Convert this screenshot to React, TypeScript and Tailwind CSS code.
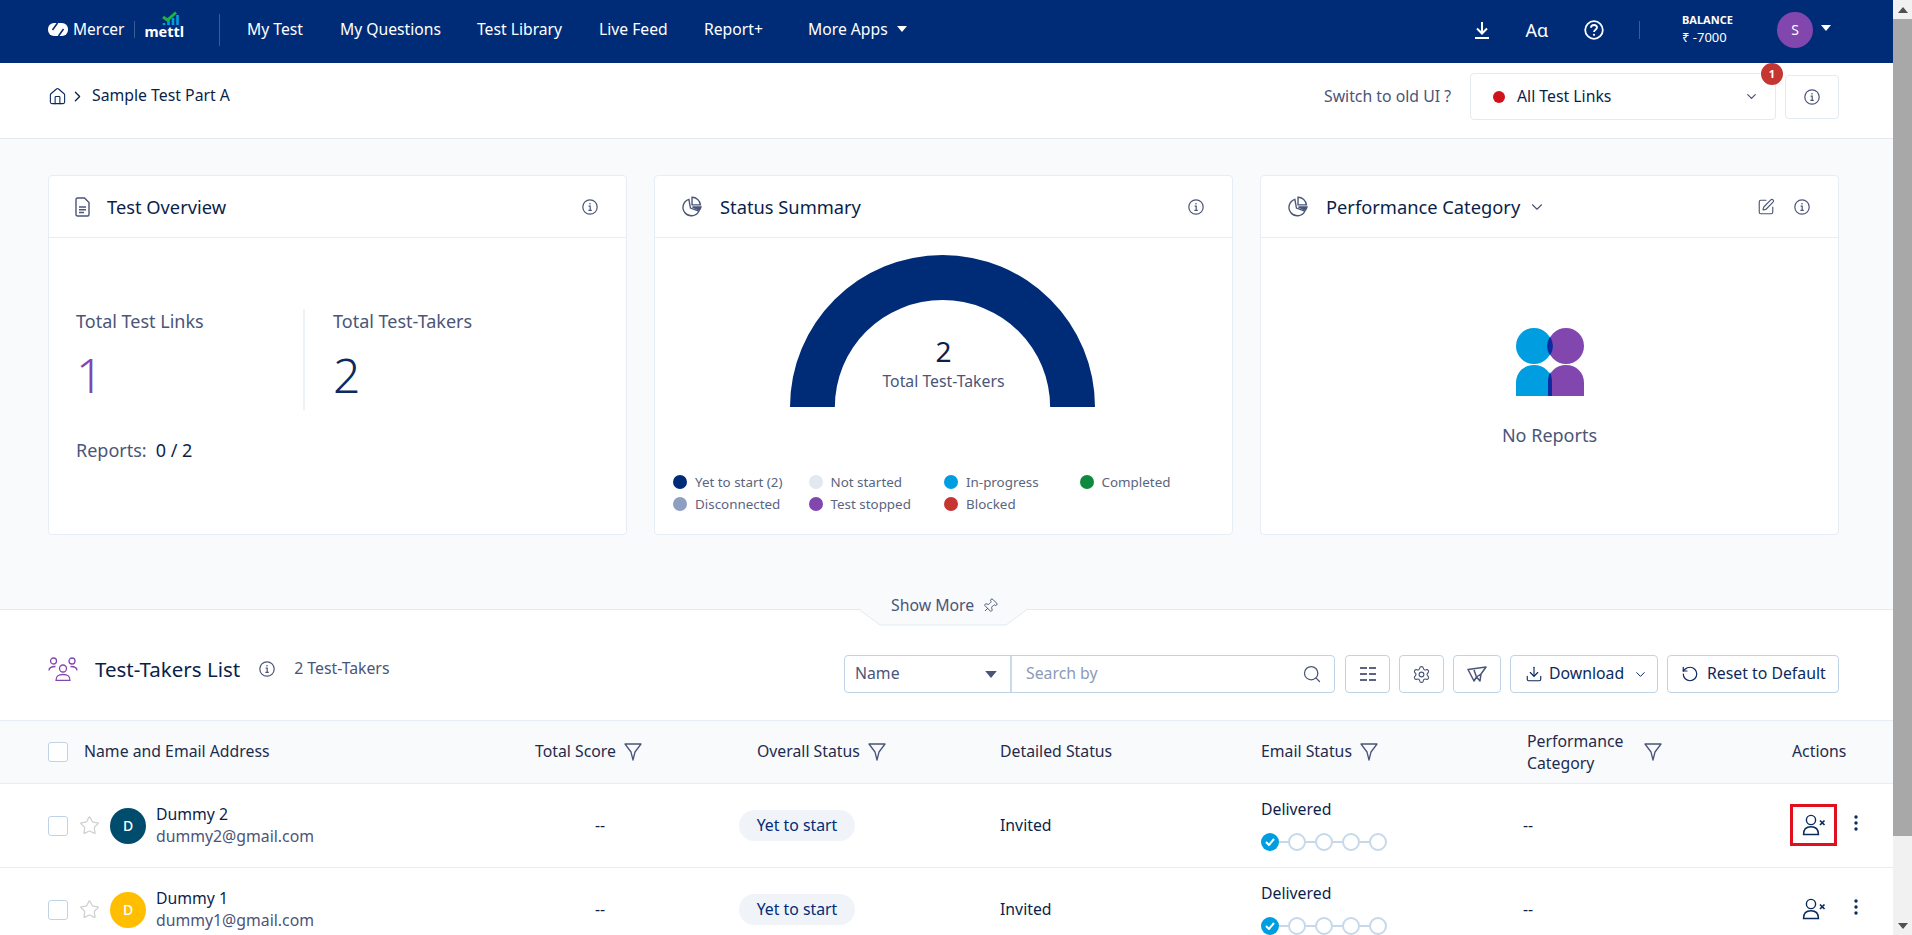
import React from "react";
import { Home, ChevronRight, ChevronDown, Search, Settings, Download, RotateCcw, Star, Pin, SquarePen } from "lucide-react";

const Info = ({ size = 16 }: { size?: number }) => (
  <svg width={size} height={size} viewBox="0 0 16 16" fill="none" stroke="#4a5578" strokeWidth="1.2" className="shrink-0">
    <circle cx="8" cy="8" r="7.2" />
    <path d="M6.6 7.2H8.2V11.4M6.4 11.4H9.8" />
    <circle cx="8" cy="4.8" r="0.8" fill="#4a5578" stroke="none" />
  </svg>
);

const PieIcon = () => (
  <svg width="21" height="21" viewBox="0 0 20 20" fill="none" stroke="#4a5578" strokeWidth="1.3" className="shrink-0">
    <path d="M7.5 3.2A8 8 0 1 0 17 14.5L9 11.5Z" />
    <path d="M10.5 1.2A8 8 0 0 1 18.5 8.5H10.5Z" />
    <path d="M11 10.5H19A8 8 0 0 1 17.6 13.4Z" fill="#4a5578" />
  </svg>
);

const Funnel = () => (
  <svg width="18" height="20" viewBox="0 0 18 20" fill="none" stroke="#4a5578" strokeWidth="1.3" strokeLinejoin="round" className="shrink-0">
    <path d="M1 2H17L11 10L9 18L7 10Z" />
  </svg>
);

const UserX = () => (
  <svg width="24" height="22" viewBox="0 0 24 22" fill="none" stroke="#0b2a5e" strokeWidth="1.4" className="shrink-0">
    <circle cx="9" cy="6" r="4.6" />
    <path d="M1.500 20.500C1.500 15.500 4.500 12.800 9 12.800C13.500 12.800 16.500 15.500 16.500 20.500Z" />
    <path d="M18 6.500L22.500 11M22.500 6.500L18 11" strokeWidth="1.7" />
  </svg>
);

const Kebab = () => (
  <svg width="4" height="18" viewBox="0 0 4 18" fill="#0b2a5e" className="shrink-0">
    <circle cx="2" cy="3" r="1.7" />
    <circle cx="2" cy="9" r="1.7" />
    <circle cx="2" cy="15" r="1.7" />
  </svg>
);

const Caret = ({ color = "white", w = 10, h = 6 }: { color?: string; w?: number; h?: number }) => (
  <svg width={w} height={h} viewBox="0 0 10 6" fill={color} className="shrink-0">
    <path d="M0 0H10L5 6Z" />
  </svg>
);

const Logo = () => (
  <div className="flex items-center w-[133px] shrink-0">
    <svg width="20" height="13" viewBox="0 0 20 13" className="shrink-0">
      <rect x="0" y="0" width="20" height="13" rx="6" fill="white" />
      <path d="M9.500 0L4.500 7M15.500 6L10.500 13" stroke="#002c77" strokeWidth="1.6" fill="none" />
    </svg>
    <span className="ml-[5px] text-[15.5px] leading-none text-white">Mercer</span>
    <div className="ml-[10px] h-[17px] w-px bg-[#3a5c97]" />
    <div className="relative ml-[9px] w-[38px] h-[20px]">
      <span className="absolute left-0 bottom-[1px] text-[14.5px] leading-none font-bold text-white">mettl</span>
      <svg width="38" height="20" viewBox="0 0 38 20" className="absolute left-0 top-[-9px]">
        <path d="M20 12V14M24.500 9V14M29 7V14M33.500 4V14" stroke="#009de0" strokeWidth="2.6" fill="none" />
        <path d="M19 6L23.500 9L32 1.500" stroke="#1fb141" strokeWidth="3" fill="none" />
      </svg>
    </div>
  </div>
);

const NavBar = () => (
  <header className="flex h-[63px] items-center bg-[#002c77] pb-[4px] pl-12 text-white shrink-0">
    <Logo />
    <div className="ml-[38px] h-[32px] w-px bg-[#3a5c97]" />
    <nav className="ml-[27px] flex items-center text-[15.7px]">
      <span className="w-[93px]">My Test</span>
      <span className="w-[137px]">My Questions</span>
      <span className="w-[122px]">Test Library</span>
      <span className="w-[105px]">Live Feed</span>
      <span className="w-[104px]">Report+</span>
      <span>More Apps</span>
      <span className="ml-[9px]"><Caret /></span>
    </nav>
    <div className="ml-auto flex items-center pr-[62px]">
      <svg width="16" height="20" viewBox="0 0 16 20" fill="none" stroke="white" strokeWidth="2" className="mr-[35px]">
        <path d="M8 2V13M3 8.500L8 13.500L13 8.500M1 18H15" />
      </svg>
      <span className="mr-[36px] text-[18px] leading-none">Aɑ</span>
      <svg width="20" height="20" viewBox="0 0 20 20" fill="none" stroke="white" strokeWidth="1.8" className="mr-[35px]">
        <circle cx="10" cy="10" r="8.800" />
        <path d="M7 7.800C7 5.800 8.400 5 10 5C11.700 5 13 6 13 7.600C13 9.600 10 9.800 10 12" />
        <circle cx="10" cy="14.800" r="1.100" fill="white" stroke="none" />
      </svg>
      <div className="h-[18px] w-px bg-[#3a5c97] mr-[42px]" />
      <div className="w-[95px] flex flex-col">
        <span className="text-[11px] leading-[14px] font-bold">BALANCE</span>
        <span className="mt-[1px] text-[13px] leading-[18px]">₹ -7000</span>
      </div>
      <div className="flex h-[36px] w-[36px] items-center justify-center rounded-full bg-[#8246af] text-[14px]">S</div>
      <span className="ml-[8px] mb-[4px]"><Caret /></span>
    </div>
  </header>
);

const SubHeader = () => (
  <div className="flex h-[76px] items-start border-b border-[#e2eaf3] bg-white pl-12 shrink-0">
    <div className="mt-[23px] flex h-[20px] items-center text-[15.8px] text-[#0b1f4b]">
      <Home size={19} strokeWidth={1.4} className="text-[#0b2a5e]" />
      <ChevronRight size={17} strokeWidth={1.8} className="ml-[2px]" />
      <span className="ml-[6px]">Sample Test Part A</span>
    </div>
    <div className="ml-auto flex items-center pr-[54px] pt-[10px]">
      <span className="text-[15.8px] text-[#4a5578]">Switch to old UI ?</span>
      <div className="relative ml-[19px] flex h-[47px] w-[306px] items-center rounded-[4px] border border-[#e2eaf3] pl-[22px] text-[15.8px] text-[#0b1f4b]">
        <span className="h-[12px] w-[12px] rounded-full bg-[#d0121b]" />
        <span className="ml-[12px]">All Test Links</span>
        <ChevronDown size={15} className="ml-auto mr-[16px] text-[#4a5578]" />
        <span className="absolute right-[-8px] top-[-11px] flex h-[22px] w-[22px] items-center justify-center rounded-full bg-[#c53532] text-[11px] font-bold text-white">1</span>
      </div>
      <div className="ml-[9px] flex h-[44px] w-[54px] items-center justify-center rounded-[4px] border border-[#e2eaf3]">
        <Info />
      </div>
    </div>
  </div>
);

const Card = ({ icon, title, right, slot, children }: { icon: React.ReactNode; title: React.ReactNode; right: React.ReactNode; slot: string; children: React.ReactNode }) => (
  <div className="flex h-[360px] flex-col rounded-[4px] border border-[#e6edf5] bg-white">
    <div className="flex h-[62px] shrink-0 items-center border-b border-[#e6edf5] pl-[26px] pr-[28px]">
      <span className={`flex shrink-0 ${slot}`}>{icon}</span>
      <span className="text-[18.3px] text-[#0b1f4b]">{title}</span>
      <span className="ml-auto flex items-center gap-[19px]">{right}</span>
    </div>
    {children}
  </div>
);

const legend: [string, string][] = [
  ["Yet to start (2)", "bg-[#002c77]"],
  ["Not started", "bg-[#e2e8f0]"],
  ["In-progress", "bg-[#009de0]"],
  ["Completed", "bg-[#0e8a3e]"],
  ["Disconnected", "bg-[#8e9fc1]"],
  ["Test stopped", "bg-[#8246af]"],
  ["Blocked", "bg-[#c53532]"],
];

const Stats = () => (
  <section className="flex h-[470px] shrink-0 flex-col bg-[#f8fafc] pt-[36px]">
    <div className="grid grid-cols-[579px_579px_579px] gap-x-[27px] pl-12">
      <Card
        slot="w-[32px]"
        icon={
          <svg width="15" height="20" viewBox="0 0 15 20" fill="none" stroke="#4a5578" strokeWidth="1.4">
            <path d="M1 2.500C1 1.600 1.600 1 2.500 1H9.500L14 5.500V17.500C14 18.400 13.400 19 12.500 19H2.500C1.600 19 1 18.400 1 17.500Z" />
            <path d="M4 10H11M4 12.800H11M4 15.500H9" />
          </svg>
        }
        title="Test Overview"
        right={<Info />}
      >
        <div className="flex flex-col pl-[27px] pt-[71px]">
          <div className="flex h-[101px]">
            <div className="w-[229px] border-r-2 border-[#edf2f7]">
              <div className="text-[18px] leading-[24px] text-[#4a5578]">Total Test Links</div>
              <div className="mt-[11px] text-[48px] leading-[62px] font-light text-[#8246af]">1</div>
            </div>
            <div className="pl-[28px]">
              <div className="text-[18px] leading-[24px] text-[#4a5578]">Total Test-Takers</div>
              <div className="mt-[11px] text-[48px] leading-[62px] font-light text-[#0b2a5e]">2</div>
            </div>
          </div>
          <div className="mt-[28px] flex text-[18px] leading-[24px]">
            <span className="text-[#4a5578]">Reports:</span>
            <span className="ml-[9px] text-[#0b1f4b]">0 / 2</span>
          </div>
        </div>
      </Card>
      <Card slot="w-[39px]" icon={<PieIcon />} title="Status Summary" right={<Info />}>
        <div className="flex flex-col">
          <div className="relative mt-[17px] flex justify-center pr-[2px]">
            <svg width="305" height="152" viewBox="0 0 306 152" preserveAspectRatio="none" className="-ml-[1px]">
              <path d="M0 152A153 152 0 0 1 306 152H261A108 107 0 0 0 45 152Z" fill="#002c77" />
            </svg>
            <div className="absolute left-0 right-0 top-[78px] flex flex-col items-center">
              <span className="text-[28px] leading-[36px] text-[#0b1f4b]">2</span>
              <span className="mt-[2px] text-[15.8px] leading-[20px] text-[#4a5578]">Total Test-Takers</span>
            </div>
          </div>
          <div className="mt-[64px] grid grid-cols-[135.5px_135.5px_135.5px_135.5px] pl-[18px]">
            {legend.map(([label, color]) => (
              <div key={label} className="flex h-[22px] items-center text-[13.4px] text-[#5b6480]">
                <span className={`h-[14px] w-[14px] rounded-full ${color}`} />
                <span className="ml-[8px]">{label}</span>
              </div>
            ))}
          </div>
        </div>
      </Card>
      <Card
        slot="w-[39px]"
        icon={<PieIcon />}
        title={
          <span className="flex items-center">
            Performance Category
            <ChevronDown size={18} strokeWidth={1.5} className="ml-[8px] text-[#4a5578]" />
          </span>
        }
        right={
          <>
            <SquarePen size={18} strokeWidth={1.5} className="text-[#4a5578]" />
            <Info />
          </>
        }
      >
        <div className="flex flex-col items-center pt-[90px]">
          <svg width="68" height="68" viewBox="0 0 68 68">
            <g>
              <ellipse cx="18" cy="18" rx="18" ry="18" fill="#009de0" />
              <path d="M0 68V55C0 44 8 37 18 37C28 37 36 44 36 55V68Z" fill="#009de0" />
              <ellipse cx="50" cy="18" rx="18" ry="18" fill="#8246af" />
              <path d="M32 68V55C32 44 40 37 50 37C60 37 68 44 68 55V68Z" fill="#8246af" />
              <path d="M34 8.500A18 18 0 0 1 34 27.500A18 18 0 0 1 34 8.500Z" fill="#0a2c9e" />
              <path d="M34 44C35.500 47 36 51 36 55V68H32V55C32 51 32.500 47 34 44Z" fill="#0a2c9e" />
            </g>
          </svg>
          <div className="mt-[27px] text-[18px] leading-[24px] text-[#4a5578]">No Reports</div>
        </div>
      </Card>
    </div>
  </section>
);

const gridCols = "grid grid-cols-[487px_204px_261px_261px_266px_263px_1fr] pl-12";

const FilterHead = ({ label, className = "" }: { label: string; className?: string }) => (
  <div className={`flex items-center gap-[8px] ${className}`}>
    <span>{label}</span>
    <Funnel />
  </div>
);

const Toolbar = () => (
  <div className="ml-auto mr-[54px] mt-[45px] flex items-center text-[15.8px] text-[#4a5578]">
    <div className="flex h-[38px] w-[491px] rounded-[4px] border border-[#bfd3e6]">
      <div className="flex w-[167px] items-center border-r-2 border-[#c9dbeb] pl-[10px] pr-[13px]">
        <span>Name</span>
        <span className="ml-auto"><Caret color="#4a5578" w={12} h={7} /></span>
      </div>
      <div className="flex flex-1 items-center pl-[14px] pr-[12px]">
        <span className="text-[#8a9bb8]">Search by</span>
        <Search size={20} strokeWidth={1.5} className="ml-auto" />
      </div>
    </div>
    <div className="ml-[10px] flex h-[38px] w-[45px] items-center justify-center rounded-[4px] border border-[#bfd3e6]">
      <svg width="16" height="14" viewBox="0 0 16 14" fill="#5b6480">
        <path d="M0 0H7V2H0ZM9 0H16V2H9ZM0 6H7V8H0ZM9 6H16V8H9ZM0 12H7V14H0ZM9 12H16V14H9Z" />
      </svg>
    </div>
    <div className="ml-[9px] flex h-[38px] w-[45px] items-center justify-center rounded-[4px] border border-[#bfd3e6]">
      <Settings size={19} strokeWidth={1.4} />
    </div>
    <div className="ml-[9px] flex h-[38px] w-[48px] items-center justify-center rounded-[4px] border border-[#bfd3e6]">
      <svg width="20" height="16" viewBox="0 0 20 16" fill="none" stroke="#4a5578" strokeWidth="1.5" strokeLinejoin="round">
        <path d="M1 3.500L19 1L14 8L13 15L9.500 11L7 15L1 3.500ZM14 8L9.500 11L7 4" />
      </svg>
    </div>
    <div className="ml-[9px] flex h-[38px] w-[148px] items-center rounded-[4px] border border-[#bfd3e6] pl-[14px] text-[#0b2a5e]">
      <Download size={18} strokeWidth={1.5} />
      <span className="ml-[6px]">Download</span>
      <ChevronDown size={15} strokeWidth={1.6} className="ml-[9px]" />
    </div>
    <div className="ml-[9px] flex h-[38px] w-[172px] items-center rounded-[4px] border border-[#bfd3e6] pl-[13px] text-[#0b2a5e]">
      <RotateCcw size={18} strokeWidth={1.6} />
      <span className="ml-[8px]">Reset to Default</span>
    </div>
  </div>
);

const Row = ({ name, email, avatar, boxed }: { name: string; email: string; avatar: string; boxed?: boolean }) => (
  <div className={`${gridCols} h-[84px] shrink-0 items-center border-b border-[#e6edf5] text-[15.8px] text-[#0b1f4b]`}>
    <div className="flex items-center">
      <span className="h-[20px] w-[20px] rounded-[3px] border border-[#bfd3e6] bg-white" />
      <Star size={21} strokeWidth={1.4} className="ml-[11px] text-[#cfcfcf]" />
      <span className={`ml-[10px] flex h-[36px] w-[36px] items-center justify-center rounded-full text-[14px] font-medium text-white ${avatar}`}>D</span>
      <div className="ml-[10px] mb-[2px] flex flex-col">
        <span className="leading-[22px]">{name}</span>
        <span className="leading-[22px] text-[#4a5578]">{email}</span>
      </div>
    </div>
    <div className="flex w-[130px] justify-center">--</div>
    <div>
      <span className="inline-flex h-[31px] w-[116px] items-center justify-center rounded-full bg-[#f0f3f8] text-[#002c77]">Yet to start</span>
    </div>
    <div>Invited</div>
    <div className="mb-[2px] flex flex-col">
      <span className="leading-[20px]">Delivered</span>
      <div className="mt-[14px] flex items-center">
        <span className="flex h-[18px] w-[18px] items-center justify-center rounded-full bg-[#009de0]">
          <svg width="10" height="8" viewBox="0 0 10 8" fill="none" stroke="white" strokeWidth="2"><path d="M1 4L4 7L9 1" /></svg>
        </span>
        {[0, 1, 2, 3].map((i) => (
          <React.Fragment key={i}>
            <span className="h-[2px] w-[9px] bg-[#c5d9ea]" />
            <span className="h-[18px] w-[18px] rounded-full border-2 border-[#c5d9ea]" />
          </React.Fragment>
        ))}
      </div>
    </div>
    <div className="-ml-[4px]">--</div>
    <div className="mb-[2px] flex items-center">
      <span className={`flex h-[42px] w-[47px] items-center justify-center ${boxed ? "border-[3px] border-[#e0101f]" : ""}`}>
        <UserX />
      </span>
      <span className="ml-[17px] mb-[4px]"><Kebab /></span>
    </div>
  </div>
);

const List = () => (
  <section className="relative flex flex-1 flex-col border-t border-[#e2eaf3] bg-white">
    <svg width="170" height="17" viewBox="0 0 170 17" className="absolute left-[859px] top-[-1px]">
      <path d="M0 0.500L21 16H147L168 0.500Z" fill="#f8fafc" stroke="#e2eaf3" />
      <path d="M1 0H167V1H1Z" fill="#f8fafc" />
    </svg>
    <div className="absolute left-[891px] top-[-16px] flex h-[24px] items-center text-[15.8px] text-[#4a5578]">
      <span>Show More</span>
      <Pin size={16} strokeWidth={1.4} className="ml-[8px] rotate-45" />
    </div>
    <div className="flex h-[110px] shrink-0 items-start pl-12">
      <div className="mt-[45px] flex h-[28px] items-center">
        <svg width="30" height="24" viewBox="0 0 30 24" fill="none" stroke="#8246af" strokeWidth="1.3" className="shrink-0">
          <circle cx="5.500" cy="4" r="3" />
          <circle cx="24" cy="4" r="3" />
          <circle cx="15" cy="11.500" r="3.500" />
          <path d="M1 13.500C1 10.500 3 9.500 7.500 9.500M29 13.500C29 10.500 27 9.500 22.500 9.500M8 23.500C8 19 10 17.500 15 17.500C20 17.500 22 19 22 23.500Z" />
        </svg>
        <span className="ml-[17px] text-[20.5px] text-[#0b1f4b]">Test-Takers List</span>
        <span className="ml-[19px] flex"><Info /></span>
        <span className="ml-[19px] text-[15.8px] text-[#4a5578]">2 Test-Takers</span>
      </div>
      <Toolbar />
    </div>
    <div className={`${gridCols} h-[64px] shrink-0 items-center border-y border-[#e6edf5] bg-[#f8fafc] text-[15.8px] text-[#1f2b4d]`}>
      <div className="flex items-center">
        <span className="h-[20px] w-[20px] rounded-[3px] border border-[#bfd3e6] bg-white" />
        <span className="ml-[16px]">Name and Email Address</span>
      </div>
      <FilterHead label="Total Score" />
      <FilterHead label="Overall Status" className="pl-[18px]" />
      <div>Detailed Status</div>
      <FilterHead label="Email Status" />
      <div className="flex items-center">
        <span className="w-[117px] leading-[22px]">Performance Category</span>
        <Funnel />
      </div>
      <div className="pl-[2px]">Actions</div>
    </div>
    <Row name="Dummy 2" email="dummy2@gmail.com" avatar="bg-[#004c6c]" boxed />
    <Row name="Dummy 1" email="dummy1@gmail.com" avatar="bg-[#ffbe00]" />
  </section>
);

const Scrollbar = () => (
  <aside className="flex h-full w-[19px] shrink-0 flex-col items-center bg-[#f1f1f1]">
    <div className="flex h-[19px] items-center justify-center">
      <svg width="10" height="6" viewBox="0 0 10 6" fill="#505050"><path d="M5 0L10 6H0Z" /></svg>
    </div>
    <div className="h-[817px] w-full bg-[#a8a8a8]" />
    <div className="mt-auto flex h-[19px] items-center justify-center">
      <svg width="10" height="6" viewBox="0 0 10 6" fill="#505050"><path d="M0 0H10L5 6Z" /></svg>
    </div>
  </aside>
);

export default function App() {
  return (
    <div className="flex h-[935px] w-[1912px] overflow-hidden bg-white font-['Noto_Sans',sans-serif]">
      <main className="flex min-w-0 flex-1 flex-col">
        <NavBar />
        <SubHeader />
        <Stats />
        <List />
      </main>
      <Scrollbar />
    </div>
  );
}
